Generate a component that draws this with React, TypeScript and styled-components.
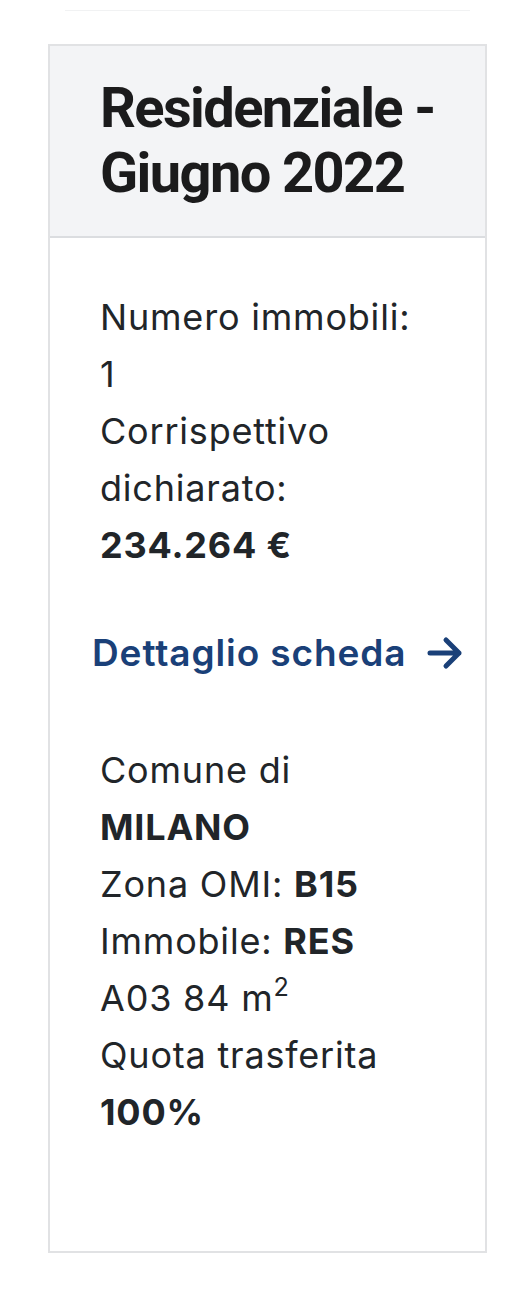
import styled, { createGlobalStyle } from 'styled-components'

const GlobalStyle = createGlobalStyle`
  html,
  body {
    margin: 0;
    padding: 0;
    background: #fff;
  }

  body {
    font-family: Inter, 'Noto Sans', sans-serif;
    color: #212529;
  }
`

const Page = styled.div`
  padding: 10px 29px 37px 48px;
`

const TopEdge = styled.div`
  height: 1px;
  margin: 0 17px 33px;
  background: #f1f2f3;
`

const Card = styled.article`
  display: flex;
  flex-direction: column;
  width: 439px;
  box-sizing: border-box;
  border: 2px solid #e1e2e4;
  background: #fff;
`

const CardHeader = styled.header`
  padding: 30px 20px 30px 50px;
  background: #f3f4f6;
  border-bottom: 2px solid #dbdde0;
`

const Title = styled.h2`
  margin: 0;
  font-family: Roboto, 'Noto Sans', sans-serif;
  font-size: 56px;
  font-weight: 700;
  line-height: 65px;
  letter-spacing: -1.6px;
  color: #1b1b1c;
`

const CardBody = styled.div`
  display: flex;
  flex-direction: column;
  padding: 51px 50px 110px;
`

const InfoBlock = styled.p`
  margin: 0;
  font-size: 36px;
  line-height: 57px;
  font-weight: 400;
  letter-spacing: 0.8px;

  strong {
    font-weight: 700;
  }

  sup {
    font-size: 0.7em;
    line-height: 0;
    vertical-align: 0.6em;
  }
`

const DetailLink = styled.a`
  display: flex;
  align-items: center;
  gap: 20px;
  margin: 50px -30px 61px -8px;
  font-size: 37px;
  line-height: 57px;
  font-weight: 600;
  letter-spacing: 0.9px;
  white-space: nowrap;
  color: #1a4078;
  text-decoration: none;

  svg {
    flex: none;
  }
`

function ArrowRight() {
  return (
    <svg width="36" height="34" viewBox="0 0 36 34" fill="none" aria-hidden="true">
      <path
        d="M3 17h29M19 4l13 13-13 13"
        stroke="currentColor"
        strokeWidth="5"
        strokeLinecap="round"
        strokeLinejoin="round"
      />
    </svg>
  )
}

export default function App() {
  return (
    <>
      <GlobalStyle />
      <Page>
        <TopEdge />
        <Card>
          <CardHeader>
            <Title>Residenziale - Giugno 2022</Title>
          </CardHeader>
          <CardBody>
            <InfoBlock>
              Numero immobili:
              <br />1
              <br />
              Corrispettivo dichiarato:
              <br />
              <strong>234.264 €</strong>
            </InfoBlock>
            <DetailLink href="#">
              Dettaglio scheda
              <ArrowRight />
            </DetailLink>
            <InfoBlock>
              Comune di <strong>MILANO</strong>
              <br />
              Zona OMI: <strong>B15</strong>
              <br />
              Immobile: <strong>RES</strong>
              <br />
              A03 84 m<sup>2</sup>
              <br />
              Quota trasferita <strong>100%</strong>
            </InfoBlock>
          </CardBody>
        </Card>
      </Page>
    </>
  )
}
